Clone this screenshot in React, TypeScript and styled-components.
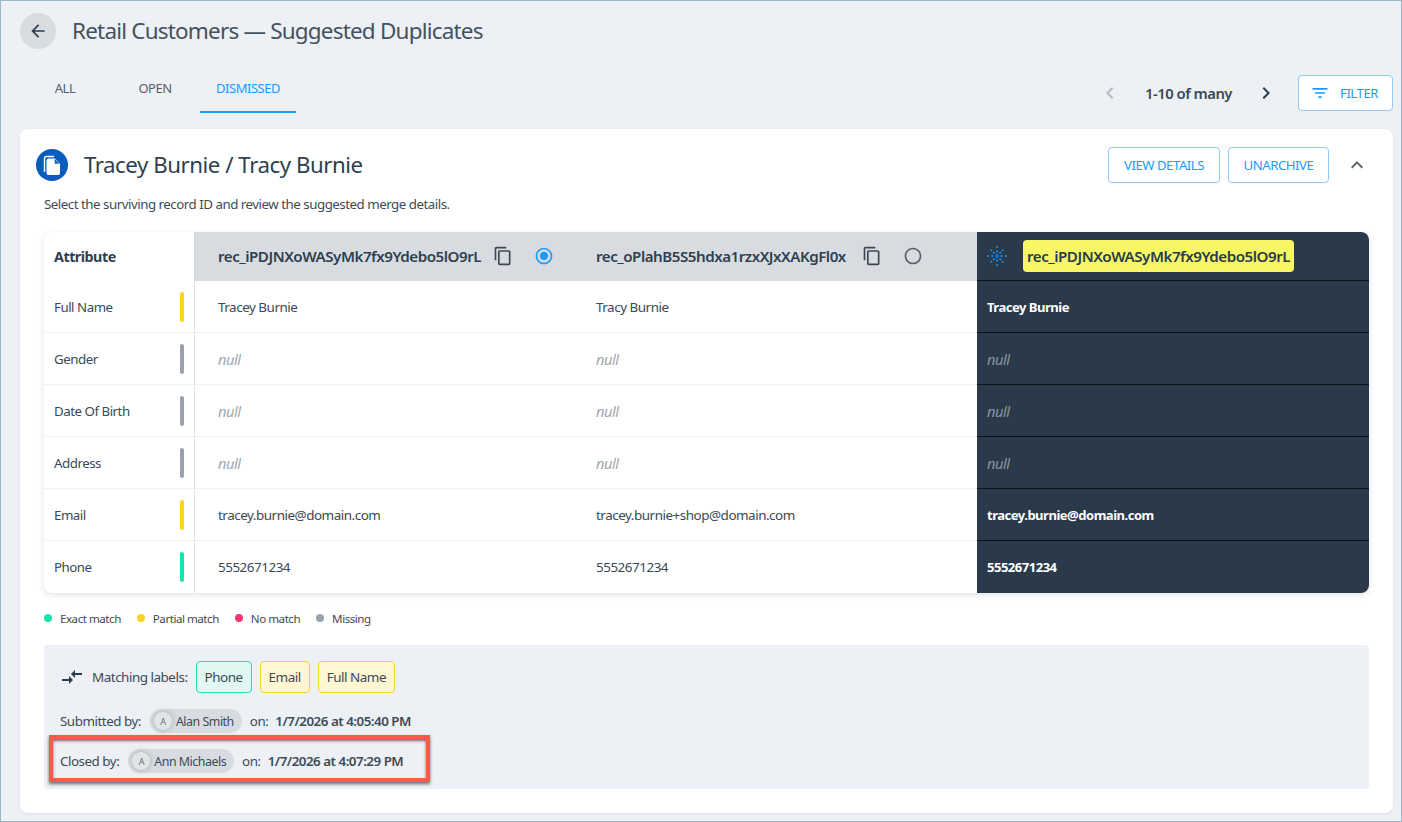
import React from "react";
import styled, { createGlobalStyle } from "styled-components";
import {
  MdArrowBack, MdChevronLeft, MdChevronRight, MdCompareArrows, MdContentCopy,
  MdExpandLess, MdFilterList, MdRadioButtonChecked, MdRadioButtonUnchecked,
} from "react-icons/md";

const Global = createGlobalStyle`
  html, body { margin: 0; padding: 0; background: #edf0f4; }
  body { font-family: "Noto Sans", "Open Sans", sans-serif; color: #2a3b4c; letter-spacing: -0.03em; }
  * { box-sizing: border-box; }
`;

const Page = styled.div`
  position: relative; width: 1402px; height: 822px; overflow: hidden; background: #edf0f4;
  border: 1px solid #9db6c6; padding: 12px 8px 8px 19px;
  display: flex; flex-direction: column;
`;
const TitleBar = styled.div`display: flex; align-items: center; gap: 16px; height: 36px;`;
const BackButton = styled.div`
  width: 36px; height: 36px; border-radius: 50%; background: #d8dce1; display: flex;
  align-items: center; justify-content: center; color: #2a3b4c; font-size: 20px;
`;
const PageTitle = styled.h1`margin: 0; font-size: 22.5px; font-weight: 400; letter-spacing: -0.036em; color: #44525f; line-height: 36px;`;
const TabBar = styled.div`display: flex; align-items: flex-start; justify-content: space-between; height: 80px; padding-top: 15px;`;
const Tabs = styled.div`display: flex; height: 49px;`;
const Tab = styled.div<{ $w: number; $active?: boolean }>`
  width: ${p => p.$w}px; height: 49px; padding-top: 1px; display: flex; align-items: center; justify-content: center;
  font-size: 13px; color: ${p => (p.$active ? "#1a9bff" : "#56616c")};
  border-bottom: 2px solid ${p => (p.$active ? "#1a9bff" : "transparent")};
`;
const Pager = styled.div`display: flex; align-items: center; height: 36px; margin-top: 11px;`;
const PageArrow = styled.div<{ $off?: boolean }>`
  display: flex; font-size: 24px; color: ${p => (p.$off ? "#b5bcc3" : "#2a3b4c")};
`;
const PageCount = styled.div`font-size: 14.8px; font-weight: 600; margin: 0 22px 0 23px; color: #3a4956;`;
const OutlineButton = styled.div<{ $w: number; $pr?: number }>`
  width: ${p => p.$w}px; height: 36px; display: flex; align-items: center; justify-content: center; gap: 10px;
  padding-right: ${p => p.$pr ?? 0}px;
  background: #fff; border: 1px solid #8fcbfb; border-radius: 4px; color: #1a9bff; font-size: 13.2px;
  svg { font-size: 20px; }
`;
const FilterWrap = styled.div`margin-left: 20px;`;
const Card = styled.div`
  position: relative; width: 1373px; height: 684px; background: #fff; border-radius: 8px; padding: 18px 24px 0 24px;
  box-shadow: 0 1px 3px rgba(40,55,70,.08);
`;
const CardHead = styled.div`display: flex; align-items: center; height: 36px; margin-left: -8px;`;
const CardTitle = styled.h2`margin: 0 0 2px 16px; font-size: 22.3px; font-weight: 400; color: #2f4050; flex: 1;`;
const CardActions = styled.div`display: flex; align-items: center; gap: 8px;`;
const Collapse = styled.div`display: flex; font-size: 24px; color: #59646e; margin: 0 0 0 8px; width: 24px;`;
const Hint = styled.p`margin: 12px 0 0; font-size: 13.3px; line-height: 18px; color: #3d4b58;`;
const Table = styled.div`
  margin-top: 19px; width: 1325px; display: grid; grid-template-columns: 150px 378px 405px 392px;
  grid-template-rows: 49px repeat(6, 52px); border-radius: 8px;
  box-shadow: 0 2px 6px rgba(40,55,70,.14);
`;
const HeadLabel = styled.div`
  display: flex; align-items: center; padding: 0 0 1px 10px; font-size: 14.3px; font-weight: 700; color: #2f4050;
`;
const IdHead = styled.div`
  display: flex; align-items: center; padding: 0 0 1px 24px; background: #d8dce1; font-size: 15.15px; font-weight: 600; color: #2f4050;
`;
const IdText = styled.span<{ $w: number }>`width: ${p => p.$w}px; white-space: nowrap;`;
const CopyIcon = styled.span`display: flex; font-size: 20px; margin: 0 0 0 12px; color: #3b4956;`;
const Radio = styled.span<{ $on?: boolean }>`
  display: flex; font-size: 20px; margin-left: 21px; color: ${p => (p.$on ? "#1a9bff" : "#555f68")};
`;
const SurvivorHead = styled.div`
  display: flex; align-items: center; padding-left: 10px; gap: 16px; background: #2a3a4b; border-top-right-radius: 8px;
  border-bottom: 1px solid #0c1218;
`;
const Highlight = styled.span`
  background: #f7f765; color: #2a3a4b; border-radius: 4px; padding: 0 4px; height: 32px; line-height: 32px;
  font-size: 15.15px; font-weight: 600; white-space: nowrap;
`;
const AttrCell = styled.div<{ $last?: boolean }>`
  display: flex; align-items: center; justify-content: space-between; padding: 0 10px 0 10px; font-size: 13.3px; color: #3a4956;
  border-bottom: ${p => (p.$last ? "none" : "1px solid #eef0f2")};
`;
const Bar = styled.span<{ $c: string }>`width: 4px; height: 30px; border-radius: 2px; background: ${p => p.$c};`;
const Cell = styled.div<{ $last?: boolean; $null?: boolean; $first?: boolean }>`
  display: flex; align-items: center; padding-left: ${p => (p.$first ? 23 : 24)}px; color: ${p => (p.$null ? "#a0a7ae" : "#3a4956")};
  font-size: ${p => (p.$null ? "14.6px" : "13.45px")};
  font-style: ${p => (p.$null ? "italic" : "normal")};
  border-left: ${p => (p.$first ? "1px solid #dfe3e7" : "none")};
  border-bottom: ${p => (p.$last ? "none" : "1px solid #eef0f2")};
`;
const DarkCell = styled.div<{ $last?: boolean; $null?: boolean }>`
  display: flex; align-items: center; padding-left: 10px; background: #2a3a4b;
  font-size: ${p => (p.$null ? "14.6px" : "13px")};
  color: ${p => (p.$null ? "#8b96a1" : "#fff")}; font-weight: ${p => (p.$null ? 400 : 700)};
  font-style: ${p => (p.$null ? "italic" : "normal")};
  border-bottom: ${p => (p.$last ? "none" : "1px solid #0c1218")};
  border-bottom-right-radius: ${p => (p.$last ? "8px" : "0")};
`;
const Legend = styled.div`display: flex; align-items: center; gap: 16px; margin-top: 17px; height: 16px;`;
const LegendItem = styled.div`display: flex; align-items: center; gap: 8px; font-size: 11.6px; color: #3d4b58;`;
const Dot = styled.span<{ $c: string }>`width: 8px; height: 8px; border-radius: 50%; background: ${p => p.$c};`;
const Panel = styled.div`
  margin-top: 19px; width: 1325px; height: 144px; background: #edf0f4; border-radius: 4px; padding: 16px; display: flex; flex-direction: column;
`;
const LabelRow = styled.div`display: flex; align-items: center; height: 32px; font-size: 13.45px; color: #3d4b58;`;
const SwapIcon = styled.span`display: flex; font-size: 24px; margin-right: 8px; color: #2a3b4c;`;
const Chip = styled.span<{ $bg: string; $bd: string }>`
  height: 32px; padding: 0 8px; margin-left: 8px; display: flex; align-items: center; border-radius: 4px;
  font-size: 13.45px; background: ${p => p.$bg}; border: 1px solid ${p => p.$bd};
`;
const ByRow = styled.div<{ $gapTop: number }>`
  display: flex; align-items: center; height: 24px; margin-top: ${p => p.$gapTop}px; font-size: 13.4px; color: #3d4b58;
`;
const UserPill = styled.span`
  display: flex; align-items: center; height: 24px; margin: 0 8px 0 9px; padding-right: 8px; background: #d8dce1; border-radius: 12px; font-size: 12.4px;
`;
const Avatar = styled.span`
  width: 18px; height: 18px; margin: 0 4px; border-radius: 50%; background: #e2e5e8; color: #66717b; font-size: 9px;
  display: flex; align-items: center; justify-content: center; box-shadow: 0 0 6px rgba(40,50,60,.28);
`;
const When = styled.strong`font-weight: 600; font-size: 13.35px; margin-left: 7px;`;
const Annotation = styled.div`
  position: absolute; left: 48px; top: 734px; width: 381px; height: 47px; border: 4px solid #fb5a4b;
  box-shadow: 0 2px 3px rgba(0,0,0,.55), inset 0 2px 3px rgba(0,0,0,.55); pointer-events: none;
`;

const DocBadge = () => (
  <svg width="32" height="32" viewBox="0 0 32 32">
    <circle cx="16" cy="16" r="16" fill="#0b5cbf" />
    <path d="M8.5 23V9.5a2 2 0 0 1 2-2H18" fill="none" stroke="#fff" strokeWidth="1.4" />
    <path d="M12.5 9.5h6.5l5 5.5v9a2 2 0 0 1-2 2h-9.5a2 2 0 0 1-2-2V11.5a2 2 0 0 1 2-2z" fill="#fff" />
    <path d="M18.7 9.8v4.9h4.6z" fill="#0b5cbf" />
  </svg>
);

const Spark = () => {
  const dots: React.ReactNode[] = [];
  for (let i = 0; i < 8; i++) {
    const a = (i * Math.PI) / 4;
    const odd = i % 2 === 1;
    dots.push(<circle key={`a${i}`} cx={10 + Math.cos(a) * 4.6} cy={10 + Math.sin(a) * 4.6} r={1} fill="#1a9bff" />);
    dots.push(<circle key={`b${i}`} cx={10 + Math.cos(a) * (odd ? 8 : 9)} cy={10 + Math.sin(a) * (odd ? 8 : 9)} r={0.9} fill="#1a9bff" />);
  }
  return (
    <svg width="20" height="20" viewBox="0 0 20 20" style={{ flex: "none" }}>
      <circle cx="10" cy="10" r="2.2" fill="#0b6fd0" />
      {dots}
    </svg>
  );
};

const rows = [
  { name: "Full Name", c: "#ffd21f", a: "Tracey Burnie", b: "Tracy Burnie", s: "Tracey Burnie" },
  { name: "Gender", c: "#9aa3ad" },
  { name: "Date Of Birth", c: "#9aa3ad" },
  { name: "Address", c: "#9aa3ad" },
  { name: "Email", c: "#ffd21f", a: "tracey.burnie@domain.com", b: "tracey.burnie+shop@domain.com", s: "tracey.burnie@domain.com" },
  { name: "Phone", c: "#19e3b1", a: "5552671234", b: "5552671234", s: "5552671234" },
];

export default function App() {
  return (
    <Page>
      <Global />
      <TitleBar>
        <BackButton><MdArrowBack /></BackButton>
        <PageTitle>Retail Customers — Suggested Duplicates</PageTitle>
      </TitleBar>
      <TabBar>
        <Tabs>
          <Tab $w={90}>ALL</Tab>
          <Tab $w={90}>OPEN</Tab>
          <Tab $w={96} $active>DISMISSED</Tab>
        </Tabs>
        <Pager>
          <PageArrow $off><MdChevronLeft /></PageArrow>
          <PageCount>1-10 of many</PageCount>
          <PageArrow><MdChevronRight /></PageArrow>
          <FilterWrap><OutlineButton $w={95} $pr={3}><MdFilterList />FILTER</OutlineButton></FilterWrap>
        </Pager>
      </TabBar>
      <Card>
        <CardHead>
          <DocBadge />
          <CardTitle>Tracey Burnie / Tracy Burnie</CardTitle>
          <CardActions>
            <OutlineButton $w={112}>VIEW DETAILS</OutlineButton>
            <OutlineButton $w={101}>UNARCHIVE</OutlineButton>
            <Collapse><MdExpandLess /></Collapse>
          </CardActions>
        </CardHead>
        <Hint>Select the surviving record ID and review the suggested merge details.</Hint>
        <Table>
          <HeadLabel>Attribute</HeadLabel>
          <IdHead>
            <IdText $w={263}>rec_iPDJNXoWASyMk7fx9Ydebo5lO9rL</IdText>
            <CopyIcon><MdContentCopy /></CopyIcon>
            <Radio $on><MdRadioButtonChecked /></Radio>
          </IdHead>
          <IdHead>
            <IdText $w={254}>rec_oPlahB5S5hdxa1rzxXJxXAKgFl0x</IdText>
            <CopyIcon><MdContentCopy /></CopyIcon>
            <Radio><MdRadioButtonUnchecked /></Radio>
          </IdHead>
          <SurvivorHead>
            <Spark />
            <Highlight>rec_iPDJNXoWASyMk7fx9Ydebo5lO9rL</Highlight>
          </SurvivorHead>
          {rows.map((r, i) => {
            const last = i === rows.length - 1;
            return (
              <React.Fragment key={r.name}>
                <AttrCell $last={last}>{r.name}<Bar $c={r.c} /></AttrCell>
                <Cell $first $last={last} $null={!r.a}>{r.a ?? "null"}</Cell>
                <Cell $last={last} $null={!r.b}>{r.b ?? "null"}</Cell>
                <DarkCell $last={last} $null={!r.s}>{r.s ?? "null"}</DarkCell>
              </React.Fragment>
            );
          })}
        </Table>
        <Legend>
          <LegendItem><Dot $c="#19e3b1" />Exact match</LegendItem>
          <LegendItem><Dot $c="#ffd21f" />Partial match</LegendItem>
          <LegendItem><Dot $c="#f5386f" />No match</LegendItem>
          <LegendItem><Dot $c="#9aa3ad" />Missing</LegendItem>
        </Legend>
        <Panel>
          <LabelRow>
            <SwapIcon><MdCompareArrows /></SwapIcon>
            Matching labels:
            <Chip $bg="#e0f8f1" $bd="#19e3b1">Phone</Chip>
            <Chip $bg="#fff6d2" $bd="#ffd21f">Email</Chip>
            <Chip $bg="#fff6d2" $bd="#ffd21f">Full Name</Chip>
          </LabelRow>
          <ByRow $gapTop={16}>
            Submitted by:
            <UserPill><Avatar>A</Avatar>Alan Smith</UserPill>
            on: <When>1/7/2026 at 4:05:40 PM</When>
          </ByRow>
          <ByRow $gapTop={16}>
            Closed by:
            <UserPill><Avatar>A</Avatar>Ann Michaels</UserPill>
            on: <When>1/7/2026 at 4:07:29 PM</When>
          </ByRow>
        </Panel>
      </Card>
      <Annotation />
    </Page>
  );
}
